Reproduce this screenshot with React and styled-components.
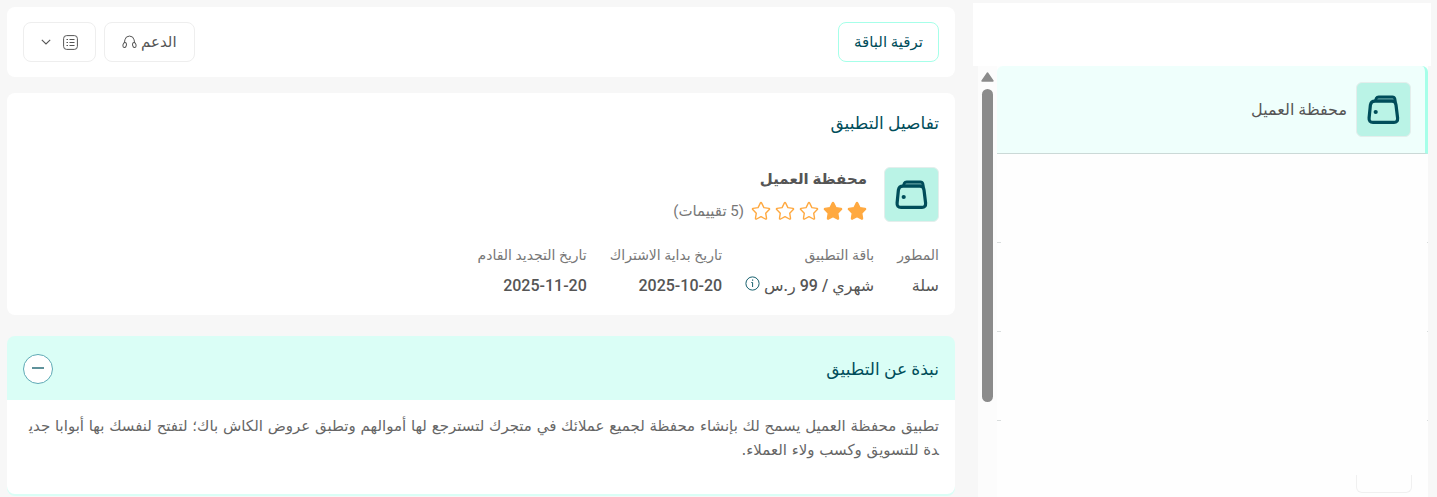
import styled, { createGlobalStyle } from "styled-components";
import { useState } from "react";

const App = () => {
  const [abierto, setAbierto] = useState(true);

  return (
    <>
      <GlobalStyle />
      <Page dir="rtl" lang="ar">
        <Sidebar>
          <SidebarHeader />
          <ListArea>
            <List>
              <ActiveItem href="#wallet">
                <WalletIcon />
                <ItemName>محفظة العميل</ItemName>
              </ActiveItem>
              <EmptyItem />
              <EmptyItem />
              <EmptyItem />
              <EmptyItem $last>
                <EmptyTile />
              </EmptyItem>
            </List>
            <ScrollTrack>
              <svg width="13" height="10" viewBox="0 0 13 10">
                <path d="M6.5 1 L12 9 H1 Z" fill="#8b8b8b" stroke="#8b8b8b" strokeWidth="1.4" strokeLinejoin="round" />
              </svg>
              <ScrollThumb />
            </ScrollTrack>
          </ListArea>
        </Sidebar>

        <Main>
          <Toolbar>
            <ToolButton $primary>ترقية الباقة</ToolButton>
            <ToolGroup>
              <ToolButton>
                الدعم
                <HeadphonesIcon />
              </ToolButton>
              <ToolButton $menu aria-label="القائمة">
                <ListIcon />
                <ChevronIcon />
              </ToolButton>
            </ToolGroup>
          </Toolbar>

          <Details>
            <Title>تفاصيل التطبيق</Title>
            <AppInfo>
              <WalletIcon />
              <div>
                <AppName>محفظة العميل</AppName>
                <Rating>
                  {[1, 2, 3, 4, 5].map((n) => (
                    <Star key={n} filled={n <= 2} />
                  ))}
                  <Reviews>(5 تقييمات)</Reviews>
                </Rating>
              </div>
            </AppInfo>
            <Facts>
              <Fact>
                <dt>المطور</dt>
                <dd>سلة</dd>
              </Fact>
              <Fact>
                <dt>باقة التطبيق</dt>
                <dd>
                  شهري / 99 ر.س <InfoIcon />
                </dd>
              </Fact>
              <Fact>
                <dt>تاريخ بداية الاشتراك</dt>
                <dd>
                  <bdi>2025-10-20</bdi>
                </dd>
              </Fact>
              <Fact>
                <dt>تاريخ التجديد القادم</dt>
                <dd>
                  <bdi>2025-11-20</bdi>
                </dd>
              </Fact>
            </Facts>
          </Details>

          <Accordion>
            <AccordionHeader>
              <Title>نبذة عن التطبيق</Title>
              <RoundButton
                aria-label="نبذة عن التطبيق"
                aria-expanded={abierto}
                onClick={() => setAbierto(!abierto)}
              >
                <svg width="12" height="12" viewBox="0 0 12 12">
                  <path d={abierto ? "M0 5H12" : "M0 5H12M6 0V11"} stroke="#5f929b" strokeWidth="2" />
                </svg>
              </RoundButton>
            </AccordionHeader>
            {abierto && (
              <AccordionBody>
                تطبيق محفظة العميل يسمح لك بإنشاء محفظة لجميع عملائك في متجرك لتسترجع لها أموالهم وتطبق عروض الكاش باك؛
                لتفتح لنفسك بها أبوابا جديدة للتسويق وكسب ولاء العملاء.
              </AccordionBody>
            )}
          </Accordion>
        </Main>
      </Page>
    </>
  );
};

export default App;

const WalletIcon = () => (
  <Tile>
    <svg width="53" height="53" viewBox="0 0 53 53" fill="none" stroke="#004d5a" strokeLinejoin="round">
      <path
        d="M18.5 17.5 L19.3 15.2 Q20 13.9 21.7 13.9 H35.4 Q37.4 13.9 37.9 15.9 L38.5 19"
        fill="#5f9fa0"
        strokeWidth="2.8"
      />
      <path
        d="M18 18.2 H35 Q38.6 18.2 39 22 L40.6 35 Q40.9 39.4 37 39.4 H16 Q11.7 39.4 12.1 35 L13.4 22 Q14 18.2 18 18.2 Z"
        fill="#baf3e6"
        strokeWidth="3.2"
      />
      <circle cx="18.7" cy="29" r="2.1" fill="#004d5a" stroke="none" />
    </svg>
  </Tile>
);

const Star = ({ filled }) => (
  <svg width="20" height="20" viewBox="0 0 20 20">
    <path
      d="M10 1.5 Q10.4 1.5 10.7 2.1 L12.9 6.6 L17.9 7.4 Q19.1 7.7 18.3 8.6 L14.7 12.2 L15.5 17.2 Q15.6 18.5 14.4 18 L10 15.7 L5.6 18 Q4.4 18.5 4.5 17.2 L5.3 12.2 L1.7 8.6 Q0.9 7.7 2.1 7.4 L7.1 6.6 L9.3 2.1 Q9.6 1.5 10 1.5 Z"
      fill={filled ? "#ffa940" : "none"}
      stroke="#ffa940"
      strokeWidth="1.4"
      strokeLinejoin="round"
    />
  </svg>
);

const HeadphonesIcon = () => (
  <svg width="15" height="14" viewBox="0 0 15 14" fill="none" stroke="#555" strokeWidth="1">
    <path d="M2.4 8 L2.9 4.8 A4.7 4.7 0 0 1 12.1 4.8 L12.6 8" />
    <ellipse cx="2.7" cy="10" rx="1.7" ry="2.5" transform="rotate(12 2.7 10)" />
    <ellipse cx="12.3" cy="10" rx="1.7" ry="2.5" transform="rotate(-12 12.3 10)" />
  </svg>
);

const ListIcon = () => (
  <svg width="15" height="15" viewBox="0 0 15 15" fill="none" stroke="#555">
    <rect x="0.6" y="0.6" width="13.8" height="13.8" rx="3" />
    <path d="M3.5 4.5H5M6.5 4.5H11.5M3.5 7.5H5M6.5 7.5H11.5M3.5 10.5H5M6.5 10.5H11.5" />
  </svg>
);

const ChevronIcon = () => (
  <svg width="10" height="6" viewBox="0 0 10 6" fill="none" stroke="#555" strokeWidth="1.1">
    <path d="M0.8 0.8 L5 4.9 L9.2 0.8" />
  </svg>
);

const InfoIcon = () => (
  <svg width="15" height="15" viewBox="0 0 15 15" fill="none" stroke="#17606e">
    <circle cx="7.5" cy="7.5" r="6.6" />
    <path d="M6.3 6.5H7.6V11" />
    <path d="M7 4.2H8.2" strokeWidth="1.2" />
  </svg>
);

const GlobalStyle = createGlobalStyle`
  * {
    box-sizing: border-box;
  }

  body {
    margin: 0;
    background: #f7f7f7;
    color: #555;
    font-family: Roboto, "DejaVu Sans", sans-serif;
    font-size: 15px;
    line-height: 24px;
  }

  button {
    font: inherit;
    cursor: pointer;
  }

  svg {
    flex: none;
  }
`;

const Page = styled.div`
  display: grid;
  grid-template-columns: minmax(0, 229fr) minmax(0, 474fr);
  gap: 18px;
  min-height: 100vh;
  padding: 0 6px 0 7px;
`;

const Sidebar = styled.aside`
  display: flex;
  flex-direction: column;
  padding-top: 3px;
`;

const SidebarHeader = styled.div`
  height: 63px;
  background: #fff;
`;

const ListArea = styled.div`
  display: flex;
  flex: 1;
  padding: 0 3px 0 5px;
`;

const List = styled.nav`
  flex: 1;
  background: #fefefe;
`;

const ActiveItem = styled.a`
  display: flex;
  align-items: center;
  gap: 9px;
  height: 88px;
  padding: 0 14px;
  border-right: 3px solid #a6ffe9;
  border-bottom: 1px solid #cbd9d7;
  border-radius: 6px 6px 0 0;
  background: #effffc;
  color: #555;
  text-decoration: none;
`;

const ItemName = styled.span`
  font-size: 16px;
`;

const EmptyItem = styled.div`
  display: flex;
  align-items: flex-end;
  height: ${(props) => (props.$last ? "72px" : "89px")};
  padding: 0 16px;
  background: ${(props) =>
    props.$last
      ? "none"
      : "linear-gradient(#d9dddd, #d9dddd) left bottom / 4px 1px no-repeat, linear-gradient(#d9dddd, #d9dddd) right bottom / 1px 1px no-repeat"};
`;

const EmptyTile = styled.div`
  width: 56px;
  height: 18px;
  border: 1px solid #f0f0f0;
  border-top: none;
  border-radius: 0 0 6px 6px;
`;

const ScrollTrack = styled.div`
  display: flex;
  flex-direction: column;
  align-items: center;
  gap: 7px;
  width: 19px;
  padding-top: 6px;
  background: #fcfcfc;
`;

const ScrollThumb = styled.div`
  width: 11px;
  height: 313px;
  border-radius: 6px;
  background: #8b8b8b;
`;

const Main = styled.main`
  min-width: 0;
  padding-top: 7px;
`;

const Toolbar = styled.header`
  display: flex;
  align-items: center;
  justify-content: space-between;
  height: 70px;
  padding: 0 16px;
  border-radius: 8px;
  background: #fff;
`;

const ToolGroup = styled.div`
  display: flex;
  gap: 8px;
`;

const ToolButton = styled.button`
  display: flex;
  align-items: center;
  justify-content: center;
  gap: ${(props) => (props.$menu ? "12px" : "4px")};
  height: 40px;
  padding: 0 ${(props) => (props.$primary ? "15px" : "17px")};
  border: 1px solid ${(props) => (props.$primary ? "#a6ffe9" : "#eee")};
  border-radius: 8px;
  background: #fff;
  color: ${(props) => (props.$primary ? "#004d5a" : "#555")};
`;

const Details = styled.section`
  height: 222px;
  margin-top: 16px;
  padding: 18px 16px;
  border-radius: 8px;
  background: #fff;
`;

const Title = styled.h2`
  margin: 0;
  color: #004d5a;
  font-size: 17px;
  font-weight: 500;
`;

const AppInfo = styled.div`
  display: flex;
  gap: 17px;
  margin-top: 32px;
`;

const Tile = styled.span`
  flex: none;
  display: block;
  width: 55px;
  height: 55px;
  border: 1px solid #e4eeec;
  border-radius: 6px;
  background: #baf3e6;

  svg {
    display: block;
  }
`;

const AppName = styled.h3`
  margin: 0;
  font-size: 15px;
  font-weight: 700;
`;

const Rating = styled.div`
  display: flex;
  align-items: center;
  gap: 4px;
  margin-top: 8px;
`;

const Reviews = styled.span`
  padding-right: 3px;
  color: #777;
`;

const Facts = styled.dl`
  display: flex;
  gap: 23px;
  margin: 20px 0 0;
`;

const Fact = styled.div`
  white-space: nowrap;

  dt {
    color: #777;
    font-size: 14px;
  }

  dd {
    margin: 7px 0 0;
    font-size: 16px;
    font-weight: 500;
  }
`;

const Accordion = styled.section`
  margin-top: 21px;
  padding-bottom: 2px;
  border-radius: 8px;
  background: #dafef6;
`;

const AccordionHeader = styled.div`
  display: flex;
  align-items: center;
  justify-content: space-between;
  height: 64px;
  padding: 2px 16px 0;
`;

const RoundButton = styled.button`
  display: flex;
  align-items: center;
  justify-content: center;
  width: 30px;
  height: 30px;
  padding: 0;
  border: 1px solid #5eaab5;
  border-radius: 50%;
  background: #fff;
`;

const AccordionBody = styled.div`
  min-height: 94px;
  padding: 14px 16px 14px 20px;
  border-radius: 0 0 8px 8px;
  background: #fff;
  color: #666;
  font-family: "DejaVu Sans", sans-serif;
  word-break: break-all;
`;
